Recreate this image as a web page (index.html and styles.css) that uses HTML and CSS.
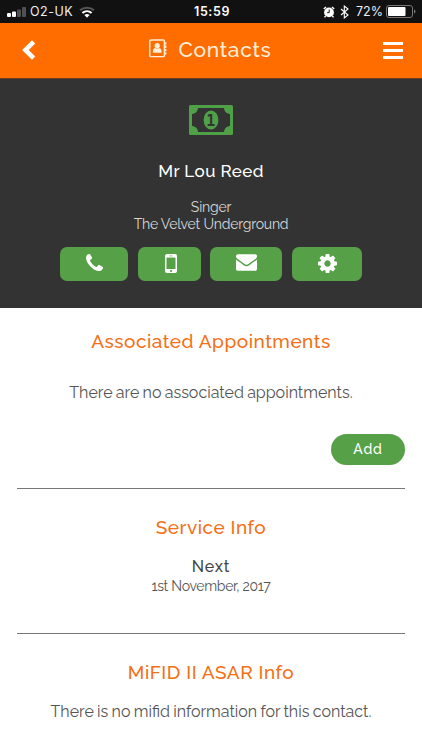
FILE: index.html
```
<!DOCTYPE html>
<html lang="en">
<head>
  <meta charset="UTF-8">
  <meta name="viewport" content="width=device-width, initial-scale=1">
  <title>Contacts</title>
  <link rel="stylesheet" href="styles.css">
</head>

<body>
  <div class="statusbar">
    <div class="status-left">
      <svg class="signal" viewBox="0 0 19 10" width="19" height="10">
        <rect x="0" y="6" width="4" height="4" rx="1" fill="#fff"/>
        <rect x="5" y="4.5" width="4" height="5.5" rx="1" fill="#fff"/>
        <rect x="10" y="2.5" width="4" height="7.5" rx="1" fill="#505050"/>
        <rect x="15" y="0" width="4" height="10" rx="1" fill="#505050"/>
      </svg>
      <span class="carrier">O2-UK</span>
      <svg class="wifi" viewBox="0 0 16 12" width="16" height="12">
        <path d="M1 4.3a10.5 10.5 0 0 1 14 0" fill="none" stroke="#555" stroke-width="2"/>
        <path d="M3.4 7a7 7 0 0 1 9.2 0" fill="none" stroke="#fff" stroke-width="2.1"/>
        <path d="M5.4 9a4 4 0 0 1 5.2 0L8 11.7z" fill="#fff"/>
      </svg>
    </div>
    <div class="time">15:59</div>
    <div class="status-right">
      <svg viewBox="0 0 12 12" width="12" height="12">
        <circle cx="6" cy="6.4" r="4.9" fill="#fff"/>
        <path d="M.8 3 3 .9M9 .9 11.2 3M2.6 10 1.5 11.4M9.4 10l1.1 1.4" stroke="#fff" stroke-width="1.4"/>
        <path d="M6.2 3.6v3H4.2" fill="none" stroke="#111" stroke-width="1"/>
      </svg>
      <svg class="bluetooth" viewBox="0 0 9 14" width="9" height="14">
        <path d="M1 4l7 6-3.7 3V1L8 4l-7 6" fill="none" stroke="#fff" stroke-width="1.1"/>
      </svg>
      <span class="percent">72%</span>
      <svg class="battery" viewBox="0 0 30 13" width="30" height="13">
        <rect x=".5" y=".5" width="26" height="12" rx="2.5" fill="none" stroke="#777"/>
        <rect x="2" y="2" width="17.5" height="9" rx="1" fill="#fff"/>
        <path d="M28 4.5q1.5.5 1.5 2t-1.5 2z" fill="#777"/>
      </svg>
    </div>
  </div>

  <div class="header">
    <svg class="back" viewBox="0 0 14 20" width="14" height="20">
      <path d="M11.6 1.8 3.4 10l8.2 8.2" fill="none" stroke="#fff" stroke-width="4.6"/>
    </svg>
    <div class="title">
      <svg viewBox="0 0 18 19" width="18" height="19">
        <rect x=".8" y="1" width="14.6" height="16.6" rx="1.2" fill="none" stroke="#fff0dc" stroke-width="1.4"/>
        <path d="M16 3.2h1.4v2.3H16zM16 6.6h1.4v2.3H16zM16 10h1.4v2.3H16zM16 13.3h1.4v2.3H16z" fill="#fff0dc"/>
        <circle cx="8.2" cy="6.7" r="2.6" fill="#fff0dc"/>
        <path d="M3.9 13.8q-.3-4.6 2.2-4.9 2.1 1.4 4.2 0 2.5.3 2.2 4.9z" fill="#fff0dc"/>
      </svg>
      <h1>Contacts</h1>
    </div>
    <div class="menu">
      <span></span>
      <span></span>
      <span></span>
    </div>
  </div>

  <div class="profile">
    <svg class="money" viewBox="0 0 44 30" width="44" height="30">
      <rect width="44" height="30" rx="1.5" fill="#4fa046"/>
      <path d="M9 3h26a6 6 0 0 0 6 6v12a6 6 0 0 0-6 6H9a6 6 0 0 0-6-6V9a6 6 0 0 0 6-6z" fill="#333"/>
      <ellipse cx="22" cy="15" rx="7.4" ry="9.6" fill="#4fa046"/>
      <text x="21.7" y="20.5" class="money-digit" text-anchor="middle">1</text>
    </svg>
    <h2>Mr Lou Reed</h2>
    <div class="role">Singer</div>
    <div class="company">The Velvet Underground</div>
    <div class="actions">
      <a class="action phone">
        <svg viewBox="0 128 1408 1408" width="17" height="17">
          <path fill="#fff" d="M1408 1240q0 27-10 70.5t-20.5 68.5q-21 50-122 106-94 51-186 51-27 0-53-3.5t-57.5-12.5-47-14.5-55.5-20.5-49-18q-98-35-175-83-127-79-264-216t-216-264q-48-77-83-175-3-9-18-49t-20.5-55.5-14.5-47-12.5-57.5-3.5-53q0-92 51-186 56-101 106-122 25-10 68.5-20.5t70.5-10.5q14 0 21 3 18 6 53 76 11 19 30 54t35 63.5 31 53.5q3 4 17.5 25t21.5 35.5 7 28.5q0 20-28.5 50t-62 55-62 53-28.5 46q0 9 5 22.5t8.5 20.5 14 24 11.5 19q76 137 174 235t235 174q2 1 19 11.5t24 14 20.5 8.5 22.5 5q18 0 46-28.5t53-62 55-62 50-28.5q14 0 28.5 7t35.5 21.5 25 17.5q25 15 53.5 31t63.5 35 54 30q70 35 76 53 3 7 3 21z"/>
        </svg>
      </a>
      <a class="action mobile">
        <svg viewBox="0 0 12 19" width="12" height="19">
          <rect width="12" height="19" rx="2" fill="#fff"/>
          <rect x="1.5" y="3.6" width="9" height="11.4" fill="#56a048"/>
          <path d="M4.5 1.9h3" stroke="#56a048" stroke-width=".7"/>
          <circle cx="6" cy="17" r="1.1" fill="#56a048"/>
        </svg>
      </a>
      <a class="action email">
        <svg viewBox="0 256 1792 1408" width="21" height="17">
          <path fill="#fff" d="M1792 710v794q0 66-47 113t-113 47h-1472q-66 0-113-47t-47-113v-794q44 49 101 87 362 246 497 345 57 42 92.5 65.5t94.5 48 110 24.5h2q51 0 110-24.5t94.5-48 92.5-65.5q170-123 498-345 57-39 100-87zm0-294q0 79-49 151t-122 123q-376 261-468 325-10 7-42.5 31t-54 38.5-52 32.5-57.5 27-50 9h-2q-23 0-50-9t-57.5-27-52-32.5-54-38.5-42.5-31q-91-64-262-182.5t-205-142.5q-62-42-117-115.5t-55-136.5q0-78 41.5-130t118.5-52h1472q65 0 112.5 47t47.5 113z"/>
        </svg>
      </a>
      <a class="action settings">
        <svg viewBox="128 128 1536 1536" width="19" height="19">
          <path fill="#fff" d="M1152 896q0-106-75-181t-181-75-181 75-75 181 75 181 181 75 181-75 75-181zm512-109v222q0 12-8 23t-20 13l-185 28q-19 54-39 91 35 50 107 138 10 12 10 25t-9 23q-27 37-99 108t-94 71q-12 0-26-9l-138-108q-44 23-91 38-16 136-29 186-7 28-36 28h-222q-14 0-24.5-8.5t-11.5-21.5l-28-184q-49-16-90-37l-141 107q-10 9-25 9-14 0-25-11-126-114-165-168-7-10-7-23 0-12 8-23 15-21 51-66.5t54-70.5q-27-50-41-99l-183-27q-13-2-21-12.5t-8-23.5v-222q0-12 8-23t19-13l186-28q14-46 39-92-40-57-107-138-10-12-10-24 0-10 9-23 26-36 98.5-107.5t94.5-71.5q13 0 26 10l138 107q44-23 91-38 16-136 29-186 7-28 36-28h222q14 0 24.5 8.5t11.5 21.5l28 184q49 16 90 37l142-107q9-9 24-9 13 0 25 10 129 119 165 170 7 8 7 22 0 12-8 23-15 21-51 66.5t-54 70.5q26 50 41 98l183 28q13 2 21 12.5t8 23.5z"/>
        </svg>
      </a>
    </div>
  </div>

  <div class="content">
    <div class="section appointments">
      <h3>Associated Appointments</h3>
      <p>There are no associated appointments.</p>
      <div class="buttons">
        <a class="btn-add">Add</a>
      </div>
    </div>

    <div class="section service">
      <h3>Service Info</h3>
      <h4>Next</h4>
      <div class="date">1st November, 2017</div>
    </div>

    <div class="section mifid">
      <h3>MiFID II ASAR Info</h3>
      <p>There is no mifid information for this contact.</p>
    </div>
  </div>
</body>
</html>
```
FILE: styles.css
```
* {
  box-sizing: border-box;
}

body {
  font-family: Raleway, Lato, sans-serif;
  margin: 0;
  background: #fff;
  color: #555;
  height: 750px;
  overflow: hidden;
}

h1, h2, h3, h4, p {
  margin: 0;
  font-weight: 500;
  white-space: nowrap;
}

svg {
  display: block;
  flex-shrink: 0;
}

/* phone status bar */
.statusbar {
  display: grid;
  grid-template-columns: 1fr auto 1fr;
  align-items: center;
  height: 23px;
  padding: 0 7px;
  background: #111;
  color: #eee;
  font-family: Inter, sans-serif;
  font-size: 12.5px;
}

.status-left {
  display: flex;
  align-items: center;
}

.carrier {
  margin: 0 6px 0 4px;
  letter-spacing: 0.5px;
}

.time {
  padding-left: 2px;
  font-weight: 600;
  color: #fff;
  letter-spacing: 0.6px;
}

.status-right {
  display: flex;
  align-items: center;
  justify-content: flex-end;
}

.bluetooth {
  margin: 0 7px 0 5px;
}

.battery {
  margin: 0 -1px 0 3px;
}

/* orange title bar */
.header {
  display: flex;
  align-items: center;
  justify-content: space-between;
  height: 56px;
  padding: 0 19px 1px 22px;
  background: #ff6c00;
  border-bottom: 1px solid #6b3f1c;
}

.title {
  display: flex;
  align-items: center;
  gap: 11px;
  padding-left: 2px;
  color: #fff0dc;
}

.title svg {
  margin-bottom: 3px;
}

.title h1 {
  font-size: 21px;
  line-height: 26px;
  letter-spacing: 0.7px;
}

.menu {
  display: flex;
  flex-direction: column;
  gap: 4px;
  width: 20px;
}

.menu span {
  height: 3px;
  background: #fff;
}

/* contact card */
.profile {
  height: 229px;
  padding-top: 26px;
  background: #333;
  color: #d8d8d8;
  text-align: center;
}

.money {
  margin: 0 auto;
}

.money-digit {
  font-family: "DejaVu Sans Mono", monospace;
  font-weight: bold;
  font-size: 15px;
  fill: #333;
}

.profile h2 {
  margin-top: 25px;
  color: #fff;
  font-size: 17px;
  line-height: 22px;
  letter-spacing: 0.4px;
}

.role,
.company {
  font-size: 14px;
  line-height: 17px;
  letter-spacing: -0.2px;
}

.role {
  margin-top: 17px;
}

.actions {
  display: flex;
  margin: 14px 0 0 60px;
}

.action {
  display: flex;
  justify-content: center;
  height: 34px;
  padding-top: 7px;
  border-radius: 7px;
  background: #56a048;
}

.phone {
  width: 68px;
  margin-right: 10px;
}

.mobile {
  width: 63px;
  padding-left: 2px;
  margin-right: 9px;
}

.email {
  width: 72px;
  margin-right: 10px;
}

.settings {
  width: 70px;
}

/* info sections */
.content {
  padding: 0 17px;
  text-align: center;
}

.section h3 {
  color: #f56f14;
  font-size: 19px;
  line-height: 24px;
  letter-spacing: 0.5px;
}

.section p {
  font-size: 16px;
  line-height: 20px;
  font-weight: 400;
  word-spacing: -0.8px;
}

.appointments {
  height: 181px;
  padding-top: 21px;
  border-bottom: 1px solid #777;
}

.appointments p {
  margin-top: 30px;
}

.buttons {
  display: flex;
  justify-content: flex-end;
  margin-top: 31px;
}

.btn-add {
  width: 74px;
  height: 31px;
  border-radius: 16px;
  background: #56a048;
  color: #fff;
  font-size: 14px;
  font-weight: 500;
  line-height: 31px;
  letter-spacing: 0.8px;
}

.service {
  height: 145px;
  padding-top: 26px;
  border-bottom: 1px solid #777;
}

.service h4 {
  margin-top: 18px;
  color: #444;
  font-size: 16px;
  line-height: 20px;
  letter-spacing: 0.8px;
}

.date {
  font-size: 14px;
  line-height: 18px;
  letter-spacing: -0.3px;
}

.mifid {
  padding-top: 26px;
}

.mifid p {
  margin-top: 18px;
}
```
